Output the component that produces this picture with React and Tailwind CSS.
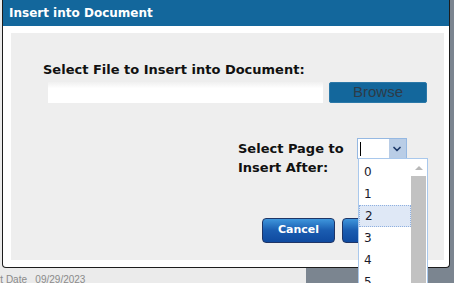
import { ChevronDown } from "lucide-react"

const verdana = { fontFamily: '"DejaVu Sans", Verdana, sans-serif' }

// Lista suspensa de páginas (aberta por cima do diálogo)
function PageList() {
  const pages = ["0", "1", "2", "3", "4", "5"]
  return (
    <div className="absolute left-[358px] top-[158px] w-[70px] h-[140px] bg-white border border-[#a9c8ec] flex">
      <div className="flex-1 flex flex-col pt-[2px]">
        {pages.map((p) => (
          <div
            key={p}
            className={`h-[22px] shrink-0 flex items-center pl-[5px] text-[12px] text-[#1a1a2a] ${
              p === "2" ? "bg-[#dfe8f6] border border-dotted border-[#8fb0e0] pl-[4px]" : ""
            }`}
            style={verdana}
          >
            {p}
          </div>
        ))}
      </div>
      <div className="w-[15px] flex flex-col mr-[1px]">
        <div className="h-[17px] flex items-center justify-center">
          <div className="w-0 h-0 border-l-[4px] border-r-[4px] border-b-[4px] border-l-transparent border-r-transparent border-b-[#b8b8b8]" />
        </div>
        <div className="flex-1 bg-[#c2c2c2]" />
      </div>
    </div>
  )
}

export default function App() {
  return (
    <div className="relative w-[454px] h-[283px] overflow-hidden flex">

      {/* Página de fundo */}
      <div className="w-[306px] h-full bg-[#ebebeb] flex flex-col justify-end">
        <p
          className="text-[10px] leading-[12px] text-[#8a8a8a] -ml-[18px] -mb-[3px] whitespace-nowrap"
          style={{ fontFamily: '"Liberation Sans", Arial, sans-serif' }}
        >
          Start Date&nbsp;&nbsp;&nbsp;09/29/2023
        </p>
      </div>
      <div className="flex-1 h-full bg-[#7b8590]" />

      {/* Diálogo */}
      <div className="absolute left-[2px] top-0 w-[448px] h-[268px] bg-white border-x border-b border-[#1c1c1c] rounded-b-[4px] flex flex-col">
        <div className="h-[26px] shrink-0 bg-[#13679c] flex items-center pl-[6px] pb-[1px]">
          <span className="text-white font-bold text-[12px]" style={verdana}>Insert into Document</span>
        </div>

        <div className="flex-1 pt-[7px] pb-[7px] pl-[8px] pr-[5px] flex">
          <div className="flex-1 bg-[#eeeeee] flex flex-col">

            <p className="mt-[29px] ml-[32px] font-bold text-[13px] text-[#111] leading-[16px]" style={verdana}>
              Select File to Insert into Document:
            </p>

            <div className="mt-[4px] ml-[37px] flex gap-[6px]">
              <div className="w-[275px] h-[21px] bg-gradient-to-b from-[#f0f0f0] to-white to-[30%]" />
              <div
                className="w-[98px] h-[21px] bg-[#13679c] border border-[#2b78a8] rounded-[2px] flex items-center justify-center text-[15px] text-[#2d3b48]"
                style={{ fontFamily: '"Liberation Sans", Arial, sans-serif' }}
              >
                Browse
              </div>
            </div>

            <div className="mt-[35px] ml-[227px] flex gap-[13px]">
              <p className="font-bold text-[13px] text-[#111] leading-[19px] pt-[1px]" style={verdana}>
                Select Page to<br />Insert After:
              </p>
              <div className="w-[50px] h-[21px] border border-[#95b8e2] bg-white flex">
                <div className="flex-1 flex items-center pl-[2px]">
                  <div className="w-[1px] h-[14px] bg-black" />
                </div>
                <div className="w-[17px] bg-[#b9cde6] flex items-center justify-center">
                  <ChevronDown size={12} strokeWidth={3.5} className="text-[#1d3a6a]" />
                </div>
              </div>
            </div>

            <div className="mt-[41px] ml-[251px] flex gap-[7px]">
              <div className="w-[73px] h-[25px] rounded-[4px] border border-[#1f3566] bg-gradient-to-b from-[#3f96dc] via-[#1a5cb0] to-[#0f4aa0] flex items-center justify-center">
                <span className="text-white font-bold text-[11px]" style={verdana}>Cancel</span>
              </div>
              <div className="w-[73px] h-[25px] rounded-[4px] border border-[#1f3566] bg-gradient-to-b from-[#3f96dc] via-[#1a5cb0] to-[#0f4aa0]" />
            </div>

          </div>
        </div>
      </div>

      <PageList />
    </div>
  )
}
